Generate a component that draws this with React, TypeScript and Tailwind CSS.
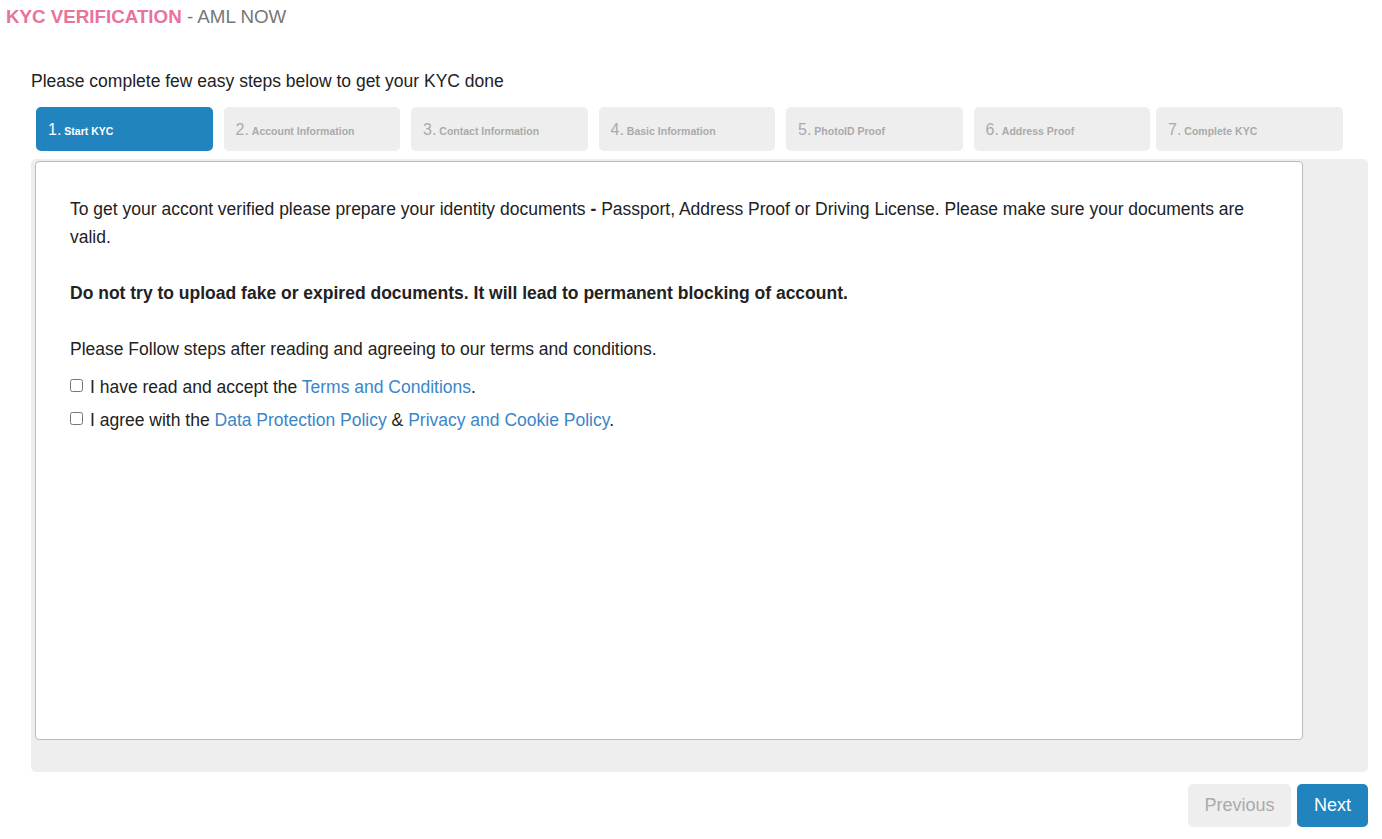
import React from 'react';

const steps = [
  'Start KYC',
  'Account Information',
  'Contact Information',
  'Basic Information',
  'PhotoID Proof',
  'Address Proof',
  'Complete KYC',
];

function StepTab({ n, label, active, last }: { n: number; label: string; active: boolean; last: boolean }) {
  return (
    <div
      className={`h-[44px] rounded-[5px] flex items-center pl-[12px] shrink-0 ${last ? 'w-[187px] ml-[-5px]' : 'w-[176.5px]'} ${
        active ? 'bg-[#2184be] text-white' : 'bg-[#eeeeee] text-[#aaaaaa]'
      }`}
    >
      <span className="text-[16px] leading-none mt-[1px]">{n}.</span>
      <span className="text-[10.5px] font-bold leading-none ml-[3px] mt-[4px]">{label}</span>
    </div>
  );
}

export default function App() {
  return (
    <div className="w-[1382px] h-[839px] bg-white text-[#222] overflow-hidden" style={{ fontFamily: '"Liberation Sans", Arial, sans-serif' }}>
      <div className="pl-[6px] pt-[6px] text-[18.75px] leading-[22px]">
        <span className="font-bold text-[#e8739d]">KYC VERIFICATION</span>
        <span className="text-[#777777]"> - AML NOW</span>
      </div>

      <div className="pl-[31px] pr-[14px]">
        <p className="mt-[42px] text-[17.5px] leading-[22px] text-[#222]">Please complete few easy steps below to get your KYC done</p>

        <div className="mt-[15px] pl-[5px] flex gap-[11px]">
          {steps.map((s, i) => (
            <StepTab key={s} n={i + 1} label={s} active={i === 0} last={i === steps.length - 1} />
          ))}
        </div>

        <div className="mt-[8px] w-[1337px] h-[613px] bg-[#eeeeee] rounded-[5px] pt-[2px] pl-[4px]">
          <div className="w-[1268px] h-[579px] bg-white border border-[#bbbbbb] rounded-[4px] pl-[34px] pr-[30px] pt-[33px] text-[17.5px] leading-[28px] text-[#222]">
            <p>
              To get your accont verified please prepare your identity documents <b>-</b> Passport, Address Proof or Driving License. Please make
              sure your documents are valid.
            </p>
            <p className="mt-[28px] font-bold">Do not try to upload fake or expired documents. It will lead to permanent blocking of account.</p>
            <p className="mt-[28px]">Please Follow steps after reading and agreeing to our terms and conditions.</p>
            <div className="mt-[8px] flex items-center leading-[33px]">
              <input type="checkbox" className="w-[13px] h-[13px] mr-[7px] mb-[4px]" />
              <span>
                I have read and accept the <span className="text-[#3a86c8]">Terms and Conditions</span>.
              </span>
            </div>
            <div className="flex items-center leading-[33px]">
              <input type="checkbox" className="w-[13px] h-[13px] mr-[7px] mb-[4px]" />
              <span>
                I agree with the <span className="text-[#3a86c8]">Data Protection Policy</span> &amp;{' '}
                <span className="text-[#3a86c8]">Privacy and Cookie Policy</span>.
              </span>
            </div>
          </div>
        </div>

        <div className="w-[1337px] mt-[12px] flex justify-end gap-[6px]">
          <button className="h-[43px] w-[103px] rounded-[5px] bg-[#eeeeee] text-[#aaaaaa] text-[18px]">Previous</button>
          <button className="h-[43px] w-[71px] rounded-[5px] bg-[#2184be] text-white text-[18px]">Next</button>
        </div>
      </div>
    </div>
  );
}
